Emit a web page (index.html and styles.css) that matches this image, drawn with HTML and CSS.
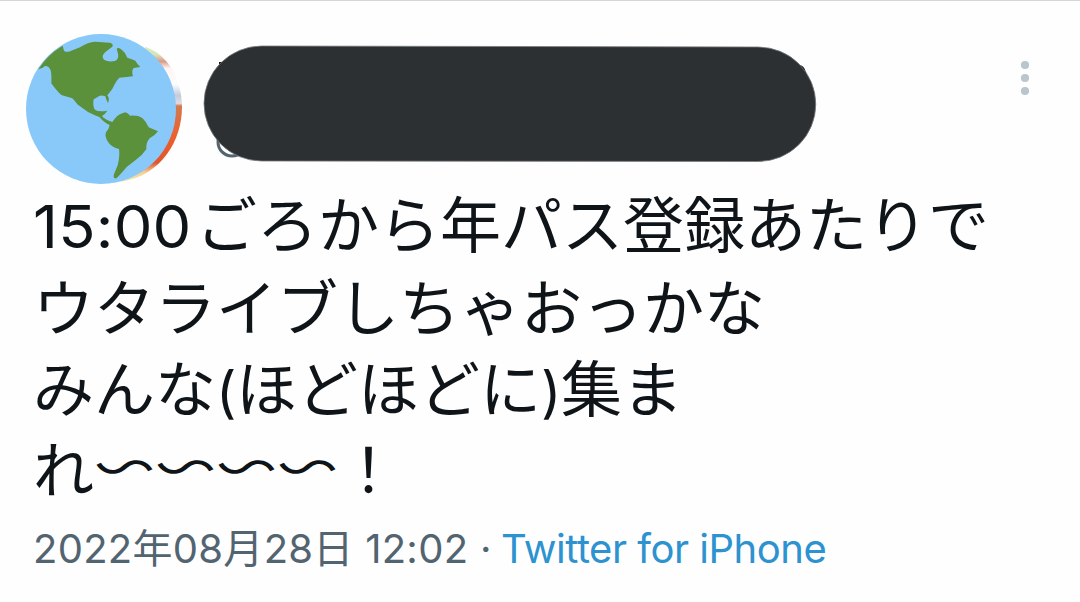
FILE: index.html
```html
<!DOCTYPE html>
<html lang="ja">
<head>
<meta charset="utf-8">
<title>ツイート</title>
<link rel="stylesheet" href="styles.css">
</head>
<body>
<article class="tweet">
  <header class="head">
    <svg class="avatar" viewBox="30 30 500 480" aria-hidden="true">
      <defs>
        <linearGradient id="rim" x1="0" y1="0" x2="0" y2="1">
          <stop offset="0" stop-color="#d8efc2"/>
          <stop offset=".06" stop-color="#d5e5b8"/>
          <stop offset=".11" stop-color="#dc9a84"/>
          <stop offset=".16" stop-color="#fff5f2"/>
          <stop offset=".28" stop-color="#fcfcff"/>
          <stop offset=".36" stop-color="#c4cbda"/>
          <stop offset=".42" stop-color="#dedbe4"/>
          <stop offset=".44" stop-color="#d07a50"/>
          <stop offset=".66" stop-color="#ed602e"/>
          <stop offset=".86" stop-color="#e3542c"/>
          <stop offset=".93" stop-color="#f3cf94"/>
          <stop offset="1" stop-color="#f3e9b0"/>
        </linearGradient>
      </defs>
      <path fill="url(#rim)" d="M405 80C475 103 516 180 516 262C516 360 455 466 335 485Z"/>
      <circle cx="273" cy="267" r="225" fill="#89c9f9"/>
      <path fill="#5c913b" d="M85 148Q112 104 158 77L162 92Q168 98 180 94L210 82Q235 66 255 65L300 68Q312 72 307 80L287 95Q272 108 282 119Q294 127 315 123Q328 117 324 101L320 86Q326 80 336 90Q347 98 352 113Q367 118 376 122Q382 133 391 141L371 144Q364 151 369 169Q351 172 328 173Q317 184 307 207L292 226Q300 236 294 249Q289 240 286 229Q269 223 262 232L251 238Q247 258 255 269Q265 277 292 272Q286 282 276 288Q284 299 307 306L314 296Q327 281 346 277Q355 279 360 287Q384 285 397 294Q408 304 416 322L444 334Q437 345 420 354Q408 365 409 388Q398 405 378 419L350 441Q332 463 319 475Q308 477 312 463L323 436Q330 408 327 387Q305 381 296 368Q283 352 288 337Q297 328 299 315Q284 309 268 291Q249 284 234 276Q215 263 202 253Q194 242 187 235L154 225Q140 213 124 190Q125 164 122 151Q116 137 105 138Q96 147 85 148Z"/>
    </svg>
    <svg class="name" viewBox="200 40 620 125" aria-hidden="true">
      <circle cx="232" cy="142" r="14" fill="none" stroke="#536471" stroke-width="3"/>
      <path fill="#0f1419" d="M219 62h8v10h-8zM800 65Q804 66 805.500 71L808 83L795 76Z"/>
      <path fill="#2c3033" stroke="#777b7e" stroke-width=".8" d="M261.500 46L758 47A57.500 57 0 0 1 758 161.500L261.500 161A57.500 57.500 0 0 1 261.500 46Z"/>
    </svg>
    <svg class="more" viewBox="0 0 10 36" aria-hidden="true">
      <circle cx="5" cy="5" r="4.100"/><circle cx="5" cy="18" r="4.100"/><circle cx="5" cy="31" r="4.100"/>
    </svg>
  </header>
  <div class="text">
    <div><span class="time">15:00</span>ごろから年パス登録あたりで</div>
    <div>ウタライブしちゃおっかな</div>
    <div>みんな<span class="paren">(</span>ほどほどに<span class="paren">)</span>集ま</div>
    <div>れ<span class="wave">〜〜〜〜</span>！</div>
  </div>
  <footer class="meta"><span class="date">2022年08月28日 12:02 ·</span> <span class="source">Twitter for iPhone</span></footer>
</article>
</body>
</html>
```
FILE: styles.css
```css
body {
  margin: 0;
  background: #fefefe;
  color: #0f1419;
  font-family: Inter, "Noto Sans CJK JP", sans-serif;
}
.tweet {
  box-sizing: border-box;
  height: 602px;
  border-top: 1px solid #d2d8d8;
  padding: 29px 50px 0 20px;
  overflow: hidden;
}
.head {
  display: flex;
  align-items: flex-start;
  height: 151px;
}
.avatar {
  width: 166.67px;
  height: 160px;
  flex: none;
}
.name {
  width: 620px;
  height: 125px;
  margin: 10px 0 0 13.33px;
}
.more {
  width: 10px;
  height: 36px;
  margin: 30px 0 0 auto;
  fill: #b9c6ce;
}
.text {
  height: 328px;
  padding-left: 13px;
  font-size: 61px;
  line-height: 81px;
  white-space: nowrap;
  font-family: "Noto Sans CJK JP", sans-serif;
}
.text div {
  height: 81px;
}
.text div:first-child {
  height: 83px;
}
.time {
  display: inline-block;
  width: 163px;
  font-family: Inter, sans-serif;
  font-size: 58.5px;
  letter-spacing: 0.2px;
  transform: scaleX(1.05);
  transform-origin: 0 0;
}
.paren {
  display: inline-block;
  width: 20px;
  font-family: Inter, sans-serif;
  font-size: 56px;
}
.wave {
  display: inline-block;
  transform: translateY(3px) scaleY(-0.78);
}
.meta {
  padding: 12px 0 0 13px;
  font-size: 40px;
  line-height: 56px;
  white-space: nowrap;
}
.date {
  color: #536471;
  letter-spacing: 0.28px;
}
.source {
  margin-left: -2px;
  color: #2c92d0;
  letter-spacing: -0.48px;
}
```
